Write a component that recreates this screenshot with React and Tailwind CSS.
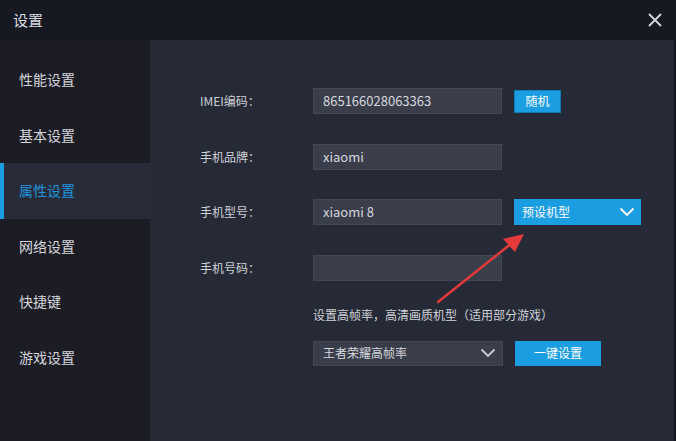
import React from "react";

const font = { fontFamily: '"Noto Sans CJK SC", "Noto Sans", sans-serif' };

const menu = ["性能设置", "基本设置", "属性设置", "网络设置", "快捷键", "游戏设置"];

function Chevron({ className }) {
  return (
    <svg className={className} width="16" height="10" viewBox="0 0 16 10" fill="none">
      <path d="M1.5 1.5 L8 8 L14.5 1.5" stroke="currentColor" strokeWidth="1.8" />
    </svg>
  );
}

function Field({ value }) {
  return (
    <div className="w-[189px] h-[26px] bg-[#3a3e4b] border border-[#444856] flex items-center pl-[9px] text-[13px] text-[#d6d8de]">
      {value}
    </div>
  );
}

function Row({ label, value, children }) {
  return (
    <div className="flex items-center h-[26px]">
      <div className="w-[113px] text-[12px] text-[#cfd1d7]">{label}</div>
      <Field value={value} />
      {children}
    </div>
  );
}

export default function App() {
  return (
    <div className="relative w-[676px] h-[441px] bg-[#1c1d24] overflow-hidden" style={font}>
      {/* 标题栏 */}
      <div className="h-10 bg-[#161922] flex items-center justify-between pl-[13px] pr-[14px]">
        <span className="text-[15px] text-[#d9dbe0]">设置</span>
        <svg width="14" height="14" viewBox="0 0 14 14">
          <path d="M1 1 L13 13 M13 1 L1 13" stroke="#d4d6dc" strokeWidth="1.8" />
        </svg>
      </div>

      <div className="flex h-[401px]">
        {/* 左侧菜单 */}
        <div className="w-[150px] pt-[12px] flex flex-col">
          {menu.map((m) => {
            const active = m === "属性设置";
            return (
              <div
                key={m}
                className={`h-[55.5px] flex items-center pl-[19px] text-[14px] relative ${
                  active ? "bg-[#282c39] text-[#1f93dc]" : "text-[#d4d6dc]"
                }`}
              >
                {active && <div className="absolute left-0 top-0 bottom-0 w-[4px] bg-[#1b9de2]" />}
                {m}
              </div>
            );
          })}
        </div>

        {/* 右侧内容 */}
        <div className="flex-1 bg-[#252a36] border-r-2 border-[#14161c] pl-[50px] pt-[48px]">
          <div className="flex flex-col gap-[29.5px]">
            <Row label="IMEI编码：" value="865166028063363">
              <div className="ml-[12px] w-[47px] h-[23px] bg-[#1b9de2] border border-[#137ab3] flex items-center justify-center text-[12px] text-white">
                随机
              </div>
            </Row>
            <Row label="手机品牌：" value="xiaomi" />
            <Row label="手机型号：" value="xiaomi 8">
              <div className="ml-[12px] w-[127px] h-[26px] bg-[#1b9de2] flex items-center justify-between pl-[8px] pr-[6px] text-[12px] text-white">
                预设机型
                <Chevron className="text-white" />
              </div>
            </Row>
            <Row label="手机号码：" value="" />
          </div>

          <div className="ml-[113px] mt-[26px] text-[12px] text-[#cfd1d7] leading-[16px]">
            设置高帧率，高清画质机型（适用部分游戏）
          </div>

          <div className="ml-[113px] mt-[18px] flex items-center">
            <div className="w-[190px] h-[25px] bg-[#3a3e4b] border border-[#444856] flex items-center justify-between pl-[9px] pr-[6px] text-[12px] text-[#d6d8de]">
              王者荣耀高帧率
              <Chevron className="text-[#c9cbd1]" />
            </div>
            <div className="ml-[12px] w-[86px] h-[25px] bg-[#1b9de2] flex items-center justify-center text-[12px] text-white">
              一键设置
            </div>
          </div>
        </div>
      </div>

      {/* 红色箭头标注 */}
      <svg className="absolute left-0 top-0 pointer-events-none" width="676" height="441">
        <line x1="438" y1="302" x2="512" y2="243" stroke="#e53a3a" strokeWidth="2.5" strokeLinecap="round" />
        <polygon points="524,234 503,239 515,252" fill="#e53a3a" />
      </svg>
    </div>
  );
}
